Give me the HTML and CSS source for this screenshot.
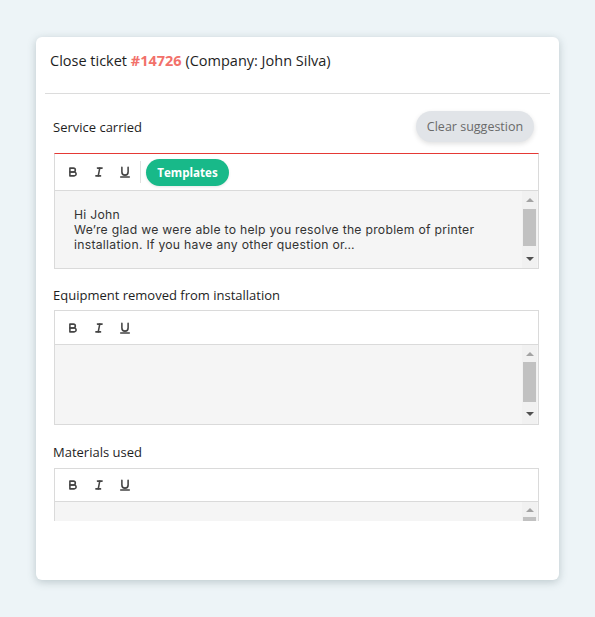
FILE: index.html
```html
<!DOCTYPE html>
<html lang="en">
<head>
<meta charset="utf-8">
<title>Close ticket</title>
<link rel="stylesheet" href="styles.css">
</head>
<body>
<div class="card">
  <div class="header">
    <div class="title">Close ticket <span class="ticket">#14726</span> (Company: John Silva)</div>
  </div>
  <div class="divider"></div>
  <div class="body">
    <section class="field first">
      <div class="label-row">
        <span class="label">Service carried</span>
        <button class="clear">Clear suggestion</button>
      </div>
      <div class="editor active">
        <div class="toolbar tall">
          <span class="tool"><svg viewBox="0 0 18 18"><path d="M5,4H9.5A2.5,2.5,0,0,1,12,6.5v0A2.5,2.5,0,0,1,9.5,9H5V4Z"/><path d="M5,9h5.5A2.5,2.5,0,0,1,13,11.5v0A2.5,2.5,0,0,1,10.5,14H5V9Z"/></svg></span>
          <span class="tool"><svg viewBox="0 0 18 18"><line x1="7" x2="13" y1="4" y2="4"/><line x1="5" x2="11" y1="14" y2="14"/><line x1="8" x2="10" y1="14" y2="4"/></svg></span>
          <span class="tool"><svg viewBox="0 0 18 18"><path d="M5,3V9a4,4,0,0,0,4,4h0a4,4,0,0,0,4-4V3"/><line x1="3.5" x2="14.5" y1="15.5" y2="15.5"/></svg></span>
          <span class="sep"></span>
          <button class="templates">Templates</button>
        </div>
        <div class="content c1">
          <div class="text">
            <div class="line">Hi John</div>
            <div class="line">We’re glad we were able to help you resolve the problem of printer</div>
            <div class="line">installation. If you have any other question or…</div>
          </div>
          <div class="sb">
            <div class="arrow up"></div>
            <div class="thumb t1"></div>
            <div class="fill"></div>
            <div class="arrow down"></div>
          </div>
        </div>
      </div>
    </section>

    <section class="field second">
      <div class="label">Equipment removed from installation</div>
      <div class="editor">
        <div class="toolbar">
          <span class="tool"><svg viewBox="0 0 18 18"><path d="M5,4H9.5A2.5,2.5,0,0,1,12,6.5v0A2.5,2.5,0,0,1,9.5,9H5V4Z"/><path d="M5,9h5.5A2.5,2.5,0,0,1,13,11.5v0A2.5,2.5,0,0,1,10.5,14H5V9Z"/></svg></span>
          <span class="tool"><svg viewBox="0 0 18 18"><line x1="7" x2="13" y1="4" y2="4"/><line x1="5" x2="11" y1="14" y2="14"/><line x1="8" x2="10" y1="14" y2="4"/></svg></span>
          <span class="tool"><svg viewBox="0 0 18 18"><path d="M5,3V9a4,4,0,0,0,4,4h0a4,4,0,0,0,4-4V3"/><line x1="3.5" x2="14.5" y1="15.5" y2="15.5"/></svg></span>
        </div>
        <div class="content c2">
          <div class="text"></div>
          <div class="sb">
            <div class="arrow up"></div>
            <div class="thumb t2"></div>
            <div class="fill"></div>
            <div class="arrow down d2"></div>
          </div>
        </div>
      </div>
    </section>

    <section class="field third">
      <div class="label">Materials used</div>
      <div class="editor">
        <div class="toolbar short">
          <span class="tool"><svg viewBox="0 0 18 18"><path d="M5,4H9.5A2.5,2.5,0,0,1,12,6.5v0A2.5,2.5,0,0,1,9.5,9H5V4Z"/><path d="M5,9h5.5A2.5,2.5,0,0,1,13,11.5v0A2.5,2.5,0,0,1,10.5,14H5V9Z"/></svg></span>
          <span class="tool"><svg viewBox="0 0 18 18"><line x1="7" x2="13" y1="4" y2="4"/><line x1="5" x2="11" y1="14" y2="14"/><line x1="8" x2="10" y1="14" y2="4"/></svg></span>
          <span class="tool"><svg viewBox="0 0 18 18"><path d="M5,3V9a4,4,0,0,0,4,4h0a4,4,0,0,0,4-4V3"/><line x1="3.5" x2="14.5" y1="15.5" y2="15.5"/></svg></span>
        </div>
        <div class="content c3">
          <div class="text"></div>
          <div class="sb">
            <div class="arrow up"></div>
            <div class="thumb t3"></div>
          </div>
        </div>
      </div>
    </section>
  </div>
</div>
</body>
</html>
```

FILE: styles.css
```css
* { box-sizing: border-box; }

html, body {
  margin: 0;
  padding: 0;
}

body {
  background: #edf4f7;
  font-family: "Open Sans", "Liberation Sans", sans-serif;
  color: #222;
  padding: 37px 0 0 36px;
  height: 617px;
  overflow: hidden;
}

.card {
  width: 523px;
  height: 543px;
  background: #fff;
  border-radius: 6px;
  box-shadow: 0 2px 9px rgba(60, 85, 95, 0.28);
}

.header {
  height: 56px;
  padding: 14px 14px 0;
}

.title {
  font-size: 14.5px;
  line-height: 20px;
  color: #1e1e1e;
}

.ticket {
  color: #f2716a;
  font-weight: 700;
}

.divider {
  margin: 0 9px;
  border-top: 1px solid #dcdcdc;
}

.body {
  height: 427px;
  overflow: hidden;
  padding: 0 20px 0 18px;
}

.label {
  font-size: 13px;
  line-height: 20px;
  color: #1e1e1e;
  margin-left: -1px;
}

.first { padding-top: 17px; }

.label-row {
  height: 31px;
  display: flex;
  justify-content: space-between;
  align-items: center;
  padding-right: 5px;
}

.clear {
  height: 31px;
  width: 118px;
  border: none;
  border-radius: 16px;
  background: #e1e4e8;
  color: #6a6a6a;
  font-family: inherit;
  font-size: 12.5px;
  box-shadow: 0 2px 5px rgba(0, 0, 0, 0.12);
  padding: 0;
}

.first .editor { margin-top: 11px; }

.second { padding-top: 16px; }
.second .editor { margin-top: 5px; }

.third { padding-top: 17px; }
.third .editor { margin-top: 6px; }

.editor {
  border: 1px solid #dadada;
}

.editor.active {
  border-top: 1px solid #e53935;
}

.toolbar {
  height: 34px;
  display: flex;
  align-items: center;
  padding-left: 5px;
  border-bottom: 1px solid #dadada;
  background: #fff;
}

.toolbar.tall { height: 37px; }
.toolbar.short { height: 33px; }

.tool {
  width: 26px;
  height: 20px;
  display: flex;
  align-items: center;
  justify-content: center;
}

.tool svg {
  width: 14px;
  height: 14px;
  fill: none;
  stroke: #444;
  stroke-width: 2;
  stroke-linecap: round;
  stroke-linejoin: round;
}

.sep {
  width: 1px;
  height: 22px;
  background: #e0e0e0;
  margin: 0 5px 0 2px;
}

.templates {
  height: 27px;
  width: 83px;
  border: none;
  border-radius: 14px;
  background: #18b989;
  color: #fff;
  font-family: inherit;
  font-weight: 700;
  font-size: 11.6px;
  padding: 0;
  box-shadow: 0 1px 3px rgba(0, 0, 0, 0.1);
}

.content {
  display: flex;
  background: #f5f5f5;
}

.c1 { height: 77px; }
.c2 { height: 79px; }
.c3 { height: 40px; }

.text {
  flex: 1;
  padding: 16px 0 0 19px;
  font-family: Inter, "Open Sans", sans-serif;
  font-size: 12.2px;
  letter-spacing: 0.27px;
  line-height: 15px;
  color: #333;
  white-space: nowrap;
}

.line {
  height: 15px;
}

.sb {
  width: 15px;
  margin-right: 1px;
  background: #f1f1f1;
  display: flex;
  flex-direction: column;
}

.arrow {
  height: 18px;
  display: flex;
  align-items: center;
  justify-content: center;
}

.arrow::before {
  content: "";
  width: 0;
  height: 0;
  border-left: 4px solid transparent;
  border-right: 4px solid transparent;
}

.arrow.up::before {
  border-bottom: 4px solid #a3a3a3;
}

.arrow.down::before {
  border-top: 4px solid #505050;
}

.arrow.down { height: 18px; }
.arrow.d2 { height: 20px; }

.thumb {
  background: #c1c1c1;
  margin: 0 1px;
}

.t1 { height: 37px; }
.t2 { height: 40px; margin-top: -1px; }
.t3 { height: 30px; margin-top: 0; }

.fill { flex: 1; }
```
